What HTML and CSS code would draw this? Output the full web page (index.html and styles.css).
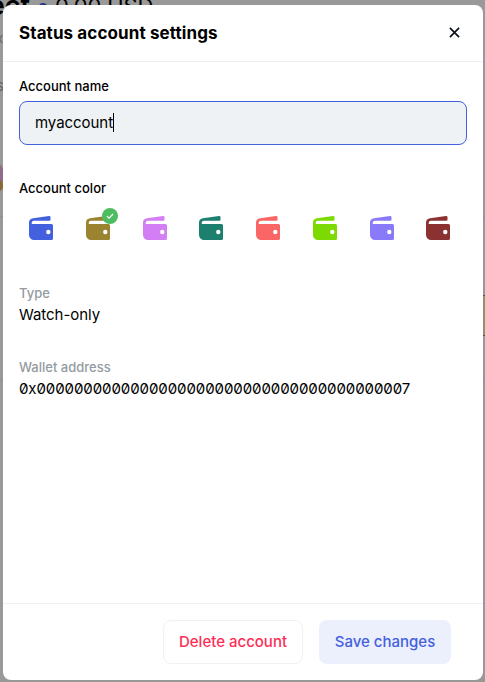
FILE: index.html
```html
<!DOCTYPE html>
<html lang="en">
<head>
<meta charset="utf-8">
<title>Status account settings</title>
<link rel="stylesheet" href="styles.css">
</head>
<body>
<svg class="defs" width="0" height="0" aria-hidden="true">
  <symbol id="wallet" viewBox="0 0 24 24">
    <path d="M0 6.5C0 3.8 1.8 2.6 4 2.2L20 .1Q21.5 0 21.5 1.3V3.7Q21.5 4.8 20.3 4.8H5C3.3 4.8 2.7 5.5 2.7 8H22.5Q24 8 24 9.5V22.5Q24 24 22.5 24H6C2 24 0 22 0 18Z" fill="currentColor"/>
    <circle cx="19.3" cy="16" r="2.2" fill="#fff"/>
  </symbol>
</svg>
<div class="backdrop" aria-hidden="true">
  <div class="bg-title">ect</div>
  <span class="bg-dot"></span>
  <div class="bg-balance">0.00 USD</div>
  <span class="bg-x">x</span>
  <span class="bg-s">s</span>
  <span class="bg-token"></span>
  <span class="bg-coin"></span>
  <span class="bg-line"></span>
  <span class="bg-line lower"></span>
  <span class="bg-card"></span>
</div>
<main class="modal">
  <header class="header">
    <h1>Status account settings</h1>
    <svg class="close" viewBox="0 0 12 12"><path d="M1 1L11 11M11 1L1 11"/></svg>
  </header>
  <section class="content">
    <div class="label">Account name</div>
    <div class="input"><span>myaccount</span><i class="caret"></i></div>
    <div class="label color-label">Account color</div>
    <div class="colors">
      <svg class="wallet blue"><use href="#wallet"/></svg>
      <div class="selected">
        <svg class="wallet gold"><use href="#wallet"/></svg>
        <svg class="check" viewBox="0 0 16 16"><circle cx="8" cy="8" r="8"/><path d="M4.9 8.1L7 10.1L11.1 6"/></svg>
      </div>
      <svg class="wallet pink"><use href="#wallet"/></svg>
      <svg class="wallet teal"><use href="#wallet"/></svg>
      <svg class="wallet coral"><use href="#wallet"/></svg>
      <svg class="wallet lime"><use href="#wallet"/></svg>
      <svg class="wallet violet"><use href="#wallet"/></svg>
      <svg class="wallet maroon"><use href="#wallet"/></svg>
    </div>
    <div class="info">
      <div class="caption">Type</div>
      <div class="value">Watch-only</div>
    </div>
    <div class="info address">
      <div class="caption">Wallet address</div>
      <div class="value hex">0x0000000000000000000000000000000000000007</div>
    </div>
  </section>
  <footer class="footer">
    <button class="delete">Delete account</button>
    <button class="save">Save changes</button>
  </footer>
</main>
</body>
</html>
```
FILE: styles.css
```css
* { box-sizing: border-box; }
body {
  margin: 0;
  height: 682px;
  overflow: hidden;
  background: #999;
  font-family: Inter, "Liberation Sans", sans-serif;
  color: #000;
  padding: 5px 2px 2px 3px;
}
.defs { position: absolute; }
.backdrop { position: absolute; inset: 0; overflow: hidden; }
.backdrop > * { position: absolute; white-space: nowrap; }
.bg-title { right: 455px; top: -11px; font-size: 27px; line-height: 34px; font-weight: 600; }
.bg-dot { left: 39px; top: 3px; width: 8px; height: 8px; border-radius: 50%; background: #29387f; }
.bg-balance { left: 55px; top: -11px; font-size: 22px; line-height: 34px; letter-spacing: -.15px; }
.bg-x { left: -4px; top: 30px; font-size: 13px; color: #62686c; }
.bg-s { left: -4px; top: 76px; font-size: 15px; color: #62686c; }
.bg-token { left: -22px; top: 160px; width: 26px; height: 30px; border-radius: 50%; background: #8d6c8c; }
.bg-coin { left: -5px; top: 180px; width: 8px; height: 11px; border-radius: 50%; background: #8b6930; }
.bg-line { left: 0; top: 216px; width: 485px; height: 1px; background: #8f9193; }
.bg-line.lower { top: 379px; }
.bg-card { left: 483px; top: 295px; width: 4px; height: 41px; background: #91906f; border: solid #555; border-width: 1px 0; }
.modal {
  position: relative;
  display: flex;
  flex-direction: column;
  width: 480px;
  height: 675px;
  border-radius: 8px;
  background: #fff;
}
.header {
  display: flex;
  align-items: center;
  justify-content: space-between;
  height: 57px;
  padding: 0 23px 0 16px;
  border-bottom: 1px solid #eef0f1;
}
h1 { margin: 0; font-size: 17px; line-height: 24px; font-weight: 700; letter-spacing: .1px; }
.close { width: 11px; height: 11px; margin-bottom: 1px; fill: none; stroke: #09101c; stroke-width: 1.8; }
.content { flex: 1; padding: 15px 16px 0; }
.label { height: 18px; font-size: 13px; line-height: 18px; font-weight: 500; }
.input {
  display: flex;
  align-items: center;
  height: 44px;
  margin-top: 6px;
  padding: 0 15px 1px;
  border: 1px solid #4360df;
  border-radius: 8px;
  background: #eef2f5;
  font-size: 15px;
  line-height: 19px;
  letter-spacing: -.05px;
}
.caret { width: 1px; height: 19px; background: #000; }
.color-label { margin-top: 34px; }
.colors { display: flex; justify-content: space-between; margin-top: 19px; padding: 0 16.5px 0 10px; }
.wallet { display: block; width: 24px; height: 24px; }
.selected { position: relative; }
.check { position: absolute; left: 16px; top: -8px; width: 16px; height: 16px; fill: #4ebc60; }
.check path { fill: none; stroke: #fff; stroke-width: 1.2; }
.blue { color: #4360df; }
.gold { color: #9b832f; }
.pink { color: #d37ef4; }
.teal { color: #1d806f; }
.coral { color: #fa6565; }
.lime { color: #7cda00; }
.violet { color: #887af9; }
.maroon { color: #8b3131; }
.info { margin-top: 44px; }
.info.address { margin-top: 32px; }
.caption { font-size: 13px; line-height: 18px; font-weight: 500; color: #939ba1; }
.value { padding-top: 2px; font-size: 15px; line-height: 22px; letter-spacing: -.05px; }
.hex { font-feature-settings: "zero"; white-space: nowrap; letter-spacing: -.09px; }
.footer {
  display: flex;
  justify-content: flex-end;
  gap: 16px;
  height: 77px;
  padding: 16px 32px 16px 0;
  border-top: 1px solid #eef2f5;
}
button { height: 44px; padding: 0 0 2px; border: 0; border-radius: 8px; font: 500 15px Inter, sans-serif; }
.delete { width: 140px; background: #fff; border: 1px solid #eef2f5; color: #ff2d55; }
.save { width: 132px; background: #eceffc; color: #4360df; }
```
